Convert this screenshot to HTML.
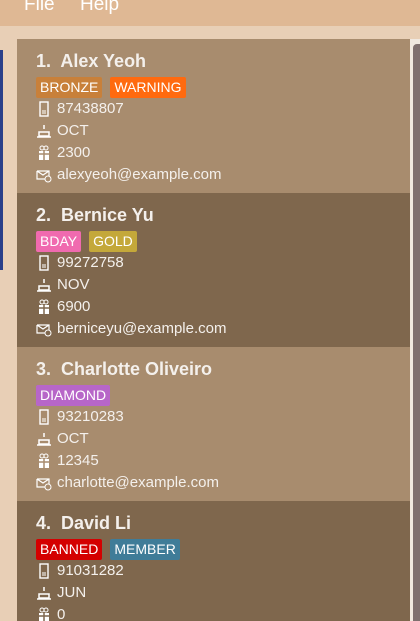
<!DOCTYPE html>
<html style="width:420px;height:621px;overflow:hidden"><head><style>
*{margin:0;padding:0;box-sizing:border-box}
body{width:420px;height:621px;overflow:hidden;background:#e8cfb6;font-family:"Liberation Sans",sans-serif;position:relative;color:#f4f0ec}
.menu{position:absolute;left:0;top:0;width:420px;height:26px;background:#dfb894;font-size:19px;color:#fff}
.menu span{position:absolute;top:-6px}
.strip{position:absolute;left:0;top:50px;width:3px;height:220px;background:#2a3f8a}
.card{position:absolute;left:17px;width:393px;height:154px;padding-left:19px;overflow:hidden}
.c1{background:#a88c6e}.c2{background:#7f674d}
.name{position:absolute;left:19px;font-size:18px;font-weight:bold}
.tags{position:absolute;top:38px;left:19px;display:flex;gap:8px}
.tag{height:21px;line-height:21px;padding:0 4px;font-size:14px;border-radius:2px;color:#fff}
.row{position:absolute;left:19px;font-size:15px;height:20px;line-height:20px;display:flex;align-items:center}
.row svg{width:16px;height:16px;margin-right:5px}
.sb{position:absolute;left:410px;top:39px;width:10px;height:582px;background:#f0e8e0}
.th{position:absolute;left:413px;top:44px;width:7px;height:577px;background:#7f6f6f;border-radius:4px 0 0 0}
</style></head><body>
<div class="menu"><span style="left:24px">File</span><span style="left:80px">Help</span></div>
<div class="strip"></div>

<div class="card c1" style="top:39px">
<div class="name" style="top:12px">1.&nbsp; Alex Yeoh</div>
<div class="tags"><div class="tag" style="background:#c8803a">BRONZE</div><div class="tag" style="background:#ff6a0f">WARNING</div></div>
<div class="row" style="top:60px"><svg viewBox="0 0 16 16"><rect x="4" y="1" width="8" height="14" fill="none" stroke="#fff" stroke-width="1.4"/><path d="M6 10h4M6 12h4" stroke="#fff"/></svg>87438807</div>
<div class="row" style="top:82px"><svg viewBox="0 0 16 16"><path d="M8 2v4M3 9h10v4H3zM1 14h14" stroke="#fff" stroke-width="1.5" fill="none"/></svg>OCT</div>
<div class="row" style="top:104px"><svg viewBox="0 0 16 16"><rect x="3" y="6" width="10" height="9" fill="#fff"/><path d="M8 6v9M3 9h10" stroke="#a88c6e" stroke-width="1.5"/><circle cx="6" cy="3" r="2" fill="none" stroke="#fff"/><circle cx="10" cy="3" r="2" fill="none" stroke="#fff"/></svg>2300</div>
<div class="row" style="top:126px"><svg viewBox="0 0 16 16"><path d="M1 4h12v5M1 4v8h8M1 4l6 4 6-4" stroke="#fff" fill="none" stroke-width="1.2"/><circle cx="12" cy="12" r="3" fill="none" stroke="#fff"/></svg>alexyeoh@example.com</div>
</div>

<div class="card c2" style="top:193px">
<div class="name" style="top:12px">2.&nbsp; Bernice Yu</div>
<div class="tags"><div class="tag" style="background:#f06aaf">BDAY</div><div class="tag" style="background:#c4a83a">GOLD</div></div>
<div class="row" style="top:60px"><svg viewBox="0 0 16 16"><rect x="4" y="1" width="8" height="14" fill="none" stroke="#fff" stroke-width="1.4"/><path d="M6 10h4M6 12h4" stroke="#fff"/></svg>99272758</div>
<div class="row" style="top:82px"><svg viewBox="0 0 16 16"><path d="M8 2v4M3 9h10v4H3zM1 14h14" stroke="#fff" stroke-width="1.5" fill="none"/></svg>NOV</div>
<div class="row" style="top:104px"><svg viewBox="0 0 16 16"><rect x="3" y="6" width="10" height="9" fill="#fff"/><path d="M8 6v9M3 9h10" stroke="#7f674d" stroke-width="1.5"/><circle cx="6" cy="3" r="2" fill="none" stroke="#fff"/><circle cx="10" cy="3" r="2" fill="none" stroke="#fff"/></svg>6900</div>
<div class="row" style="top:126px"><svg viewBox="0 0 16 16"><path d="M1 4h12v5M1 4v8h8M1 4l6 4 6-4" stroke="#fff" fill="none" stroke-width="1.2"/><circle cx="12" cy="12" r="3" fill="none" stroke="#fff"/></svg>berniceyu@example.com</div>
</div>

<div class="card c1" style="top:347px">
<div class="name" style="top:12px">3.&nbsp; Charlotte Oliveiro</div>
<div class="tags"><div class="tag" style="background:#b766c8">DIAMOND</div></div>
<div class="row" style="top:60px"><svg viewBox="0 0 16 16"><rect x="4" y="1" width="8" height="14" fill="none" stroke="#fff" stroke-width="1.4"/><path d="M6 10h4M6 12h4" stroke="#fff"/></svg>93210283</div>
<div class="row" style="top:82px"><svg viewBox="0 0 16 16"><path d="M8 2v4M3 9h10v4H3zM1 14h14" stroke="#fff" stroke-width="1.5" fill="none"/></svg>OCT</div>
<div class="row" style="top:104px"><svg viewBox="0 0 16 16"><rect x="3" y="6" width="10" height="9" fill="#fff"/><path d="M8 6v9M3 9h10" stroke="#a88c6e" stroke-width="1.5"/><circle cx="6" cy="3" r="2" fill="none" stroke="#fff"/><circle cx="10" cy="3" r="2" fill="none" stroke="#fff"/></svg>12345</div>
<div class="row" style="top:126px"><svg viewBox="0 0 16 16"><path d="M1 4h12v5M1 4v8h8M1 4l6 4 6-4" stroke="#fff" fill="none" stroke-width="1.2"/><circle cx="12" cy="12" r="3" fill="none" stroke="#fff"/></svg>charlotte@example.com</div>
</div>

<div class="card c2" style="top:501px;height:120px">
<div class="name" style="top:12px">4.&nbsp; David Li</div>
<div class="tags"><div class="tag" style="background:#d40000">BANNED</div><div class="tag" style="background:#3f7c98">MEMBER</div></div>
<div class="row" style="top:60px"><svg viewBox="0 0 16 16"><rect x="4" y="1" width="8" height="14" fill="none" stroke="#fff" stroke-width="1.4"/><path d="M6 10h4M6 12h4" stroke="#fff"/></svg>91031282</div>
<div class="row" style="top:82px"><svg viewBox="0 0 16 16"><path d="M8 2v4M3 9h10v4H3zM1 14h14" stroke="#fff" stroke-width="1.5" fill="none"/></svg>JUN</div>
<div class="row" style="top:104px"><svg viewBox="0 0 16 16"><rect x="3" y="6" width="10" height="9" fill="#fff"/><path d="M8 6v9M3 9h10" stroke="#7f674d" stroke-width="1.5"/><circle cx="6" cy="3" r="2" fill="none" stroke="#fff"/><circle cx="10" cy="3" r="2" fill="none" stroke="#fff"/></svg>0</div>
</div>

<div class="sb"></div><div class="th"></div>
</body></html>
